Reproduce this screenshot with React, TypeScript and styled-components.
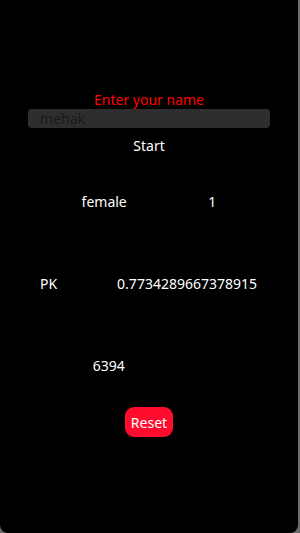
import styled, { createGlobalStyle } from 'styled-components';

const GlobalStyle = createGlobalStyle`
	html, body {
		margin: 0;
		padding: 0;
		background: #6b6b6b;
	}
	body {
		font-family: 'Noto Sans', 'Open Sans', sans-serif;
	}
`;

const Panel = styled.div`
	width: 298px;
	height: 533px;
	background: #000;
	border-radius: 0 0 8px 8px;
	display: flex;
	flex-direction: column;
	align-items: center;
	padding-top: 90px;
	box-sizing: border-box;
	color: #fff;
	font-size: 14px;
	line-height: 19px;
`;

const Label = styled.div`
	color: #ff0000;
`;

const NameInput = styled.input`
	width: 242px;
	height: 19px;
	box-sizing: border-box;
	border: none;
	border-radius: 4px;
	background: #2e2e2e;
	color: #1a1a1a;
	font-family: inherit;
	font-size: 14px;
	padding: 0 12px;
	outline: none;
`;

const TextButton = styled.div`
	margin-top: 8px;
	color: #fff;
	cursor: pointer;
`;

const Row = styled.div<{ $top: number; $justify?: string; $pad?: string }>`
	width: 100%;
	box-sizing: border-box;
	display: flex;
	justify-content: ${p => p.$justify ?? 'space-evenly'};
	padding: ${p => p.$pad ?? '0'};
	margin-top: ${p => p.$top}px;
`;

const ResetButton = styled.button`
	margin-top: 32px;
	height: 30px;
	padding: 0 6px;
	border: none;
	border-radius: 9px;
	background: #ff0b2e;
	color: #fff;
	font-family: inherit;
	font-size: 14px;
	cursor: pointer;
`;

const App = (): JSX.Element => {
	return (
		<>
			<GlobalStyle />
			<Panel>
				<Label>Enter your name</Label>
				<NameInput defaultValue="mehak" />
				<TextButton>Start</TextButton>
				<Row $top={37}>
					<span>female</span>
					<span>1</span>
				</Row>
				<Row $top={63} $justify="space-between" $pad="0 41px 0 40px">
					<span>PK</span>
					<span>0.7734289667378915</span>
				</Row>
				<Row $top={63} $pad="0 0 0 6px">
					<span>6394</span>
					<span></span>
				</Row>
				<ResetButton>Reset</ResetButton>
			</Panel>
		</>
	);
};

export default App;
